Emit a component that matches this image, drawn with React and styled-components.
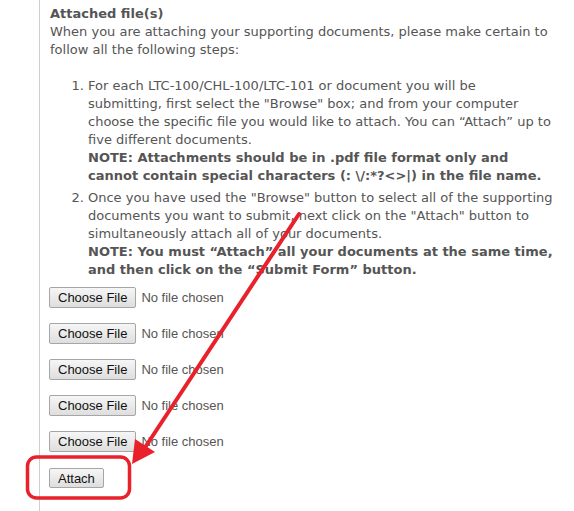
import React from "react";
import styled, { createGlobalStyle } from "styled-components";

const Global = createGlobalStyle`
  html, body { margin: 0; padding: 0; background: #fff; }
  body { width: 574px; height: 511px; overflow: hidden; }
`;

const Page = styled.div`
  position: relative;
  height: 511px;
  padding-left: 39px;
`;

const Column = styled.div`
  height: 100%;
  border-left: 1px solid #cfcfcf;
  padding: 5px 0 0 10px;
  font-family: "DejaVu Sans", Verdana, sans-serif;
  font-size: 13px;
  line-height: 18px;
  color: #555;
`;

const Title = styled.div`
  font-weight: bold;
`;

const Intro = styled.p`
  margin: 0 0 18px;
  white-space: nowrap;
`;

const Steps = styled.ol`
  margin: 0;
  padding-left: 38px;
  white-space: nowrap;
`;

const Step = styled.li`
  margin-bottom: 4px;
`;

const Note = styled.strong`
  font-weight: bold;
`;

const Uploads = styled.div`
  display: flex;
  flex-direction: column;
  gap: 15px;
  margin: 8px 0 0 -1px;
`;

const FileRow = styled.div`
  display: flex;
  align-items: center;
  gap: 5px;
  font-family: "Liberation Sans", Arial, sans-serif;
  font-size: 13px;
  color: #555;
`;

const Btn = styled.button`
  height: ${(p) => p.$h || 21}px;
  padding: 0 8px;
  font-family: "Liberation Sans", Arial, sans-serif;
  font-size: 13px;
  color: #111;
  border: 1px solid #a6a6a6;
  border-radius: 2px;
  background: linear-gradient(#f6f6f6, #dedede);
  cursor: default;
`;

const AttachWrap = styled.div`
  margin: 16px 0 0 -1px;
`;

const Overlay = styled.svg`
  position: absolute;
  left: 0;
  top: 0;
  pointer-events: none;
`;

const Annotation = () => (
  <Overlay width="574" height="511" viewBox="0 0 574 511">
    <rect x="27.5" y="457" width="102" height="41" rx="9" fill="none" stroke="#e8212b" strokeWidth="3.5" />
    <line x1="299" y1="214" x2="146" y2="446" stroke="#e8212b" strokeWidth="4" strokeLinecap="round" />
    <polygon points="132,464 135,439 155,452" fill="#e8212b" />
  </Overlay>
);

export default function App() {
  return (
    <Page>
      <Global />
      <Column>
        <Title>Attached file(s)</Title>
        <Intro>
          When you are attaching your supporting documents, please make certain to
          <br />
          follow all the following steps:
        </Intro>
        <Steps>
          <Step>
            For each LTC-100/CHL-100/LTC-101 or document you will be
            <br />
            submitting, first select the "Browse" box; and from your computer
            <br />
            choose the specific file you would like to attach. You can “Attach” up to
            <br />
            five different documents.
            <br />
            <Note>
              NOTE: Attachments should be in .pdf file format only and
              <br />
              cannot contain special characters (: \/:*?&lt;&gt;|) in the file name.
            </Note>
          </Step>
          <Step>
            Once you have used the "Browse" button to select all of the supporting
            <br />
            documents you want to submit, next click on the "Attach" button to
            <br />
            simultaneously attach all of your documents.
            <br />
            <Note>
              NOTE: You must “Attach” all your documents at the same time,
              <br />
              and then click on the “Submit Form” button.
            </Note>
          </Step>
        </Steps>
        <Uploads>
          {[0, 1, 2, 3, 4].map((i) => (
            <FileRow key={i}>
              <Btn type="button">Choose File</Btn>
              <span>No file chosen</span>
            </FileRow>
          ))}
        </Uploads>
        <AttachWrap>
          <Btn type="button" $h={20}>Attach</Btn>
        </AttachWrap>
      </Column>
      <Annotation />
    </Page>
  );
}
